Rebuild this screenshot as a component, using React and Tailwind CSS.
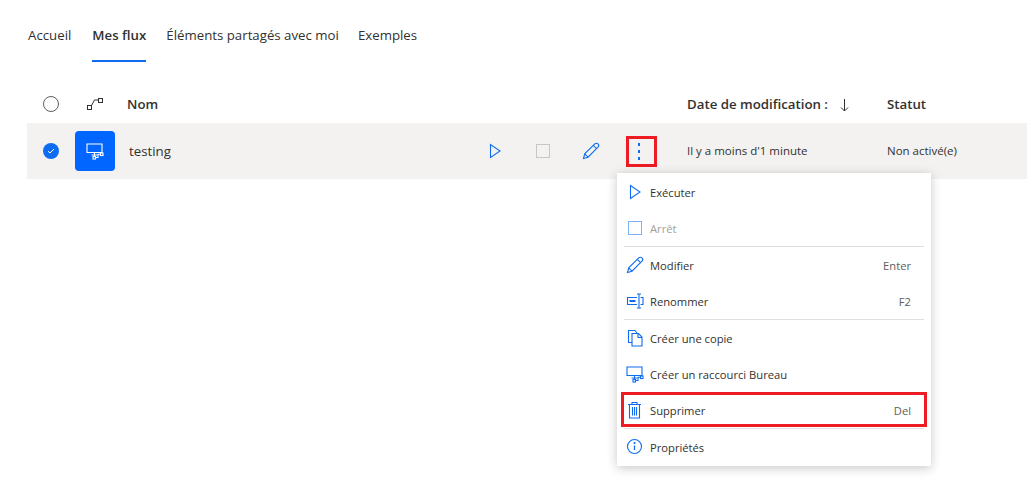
const BLUE = '#0f6cf0'

function Svg({ size = 20, className = '', children }) {
  return (
    <svg width={size} height={size} viewBox="0 0 20 20" fill="none" stroke={BLUE} strokeWidth="1.1" className={className}>
      {children}
    </svg>
  )
}

const PlayIcon = () => <Svg><path d="M5.5 3.500v13l9.500-6.500z" /></Svg>

const PencilIcon = () => (
  <Svg>
    <path d="M2.500 17.500l1.200-4.600L13.800 2.900c.9-.9 2.300-.9 3.200 0s.9 2.300 0 3.200L7 16.200z" />
    <path d="M12.300 4.400l3.300 3.300M3.700 12.900l3.300 3.300" />
  </Svg>
)

const RenameIcon = () => (
  <Svg>
    <path d="M12 6.500H2.500v7H12M15.500 6.500h2.500v7h-2.500" />
    <path d="M4.500 10h6" strokeWidth="2" />
    <path d="M12 3h4M14 3v14M12 17h4" />
  </Svg>
)

const CopyIcon = () => (
  <Svg>
    <path d="M7 14.500H3.500V2.500h6.500l2 2.500" />
    <path d="M7 5.500h6.500l3.500 3.500v9H7z" />
    <path d="M13 5.500V9.500h4" />
  </Svg>
)

const DesktopFlowIcon = ({ color = BLUE }) => (
  <svg width="20" height="20" viewBox="0 0 20 20" fill="none" stroke={color} strokeWidth="1.1">
    <path d="M2 3h15v8.500H2z" />
    <path d="M9.500 11.500v4M6.500 14h6" />
    <rect x="8" y="15.500" width="2.500" height="2.500" />
    <rect x="15.500" y="12" width="2.500" height="2.500" />
    <path d="M10.500 16.500h2.500v-3.200h2.500" />
  </svg>
)

const TrashIcon = () => (
  <Svg>
    <path d="M3 4.500h13M7 4.500V2.500h5v2M4.500 4.500v13.500h10V4.500M7.500 7v8.500M9.500 7v8.500M11.500 7v8.500" />
  </Svg>
)

const InfoIcon = () => (
  <svg width="20" height="20" viewBox="0 0 20 20" fill="none" stroke={BLUE} strokeWidth="1.1">
    <circle cx="9.500" cy="9.500" r="7" />
    <path d="M9.500 8.500v4.500" strokeWidth="1.300" />
    <circle cx="9.500" cy="6" r=".5" fill={BLUE} />
  </svg>
)

const MENU = [
  { label: 'Exécuter', icon: <PlayIcon /> },
  { label: 'Arrêt', disabled: true, icon: <span className="block w-[14px] h-[14px] border border-[#7fb0f5]" /> },
  { divider: true },
  { label: 'Modifier', icon: <PencilIcon />, key: 'Enter' },
  { label: 'Renommer', icon: <RenameIcon />, key: 'F2' },
  { divider: true },
  { label: 'Créer une copie', icon: <CopyIcon /> },
  { label: 'Créer un raccourci Bureau', icon: <DesktopFlowIcon /> },
  { label: 'Supprimer', icon: <TrashIcon />, key: 'Del', marked: true },
  { divider: true },
  { label: 'Propriétés', icon: <InfoIcon /> },
]

function MenuItem({ item }) {
  return (
    <div className={`relative flex items-center h-9 pl-2 pr-5 text-[11.2px] ${item.disabled ? 'text-[#a19f9d]' : 'text-[#323130]'}`}>
      <span className="w-5 h-5 flex items-center justify-center mr-[5px]">{item.icon}</span>
      <span className="flex-1 pt-0.5">{item.label}</span>
      {item.key && <span className="pt-0.5 text-[#605e5c]">{item.key}</span>}
      {item.marked && <span className="absolute left-[4px] right-[4px] top-0 h-[35px] border-[3px] border-[#ed1c24]" />}
    </div>
  )
}

function ContextMenu() {
  return (
    <div className="absolute left-[617px] top-[173px] w-[314px] py-px bg-white shadow-[0_2px_10px_rgba(0,0,0,0.22)]">
      {MENU.map((item, i) =>
        item.divider
          ? <div key={i} className="h-px mx-[7px] bg-[#e1dfdd]" />
          : <MenuItem key={i} item={item} />
      )}
    </div>
  )
}

export default function App() {
  return (
    <div className="relative h-[486px] bg-white overflow-hidden text-[#323130]" style={{ fontFamily: '"Open Sans", "Noto Sans", sans-serif' }}>
      {/* Tabs */}
      <div className="flex gap-5 pl-7 pt-[25px] text-[13.25px] leading-5">
        <div className="h-[37px]">Accueil</div>
        <div className="h-[37px] ml-px font-semibold border-b-2 border-[#0f6cf0]">Mes flux</div>
        <div className="h-[37px]">Éléments partagés avec moi</div>
        <div className="h-[37px] -ml-px">Exemples</div>
      </div>

      {/* Table header */}
      <div className="flex items-center h-[61px] ml-[27px] pt-[25px] text-[13.25px] font-semibold">
        <div className="w-12 flex justify-center">
          <span className="w-4 h-4 mb-0.5 rounded-full border border-[#605e5c]" />
        </div>
        <div className="w-10 flex justify-center">
          <svg width="20" height="20" viewBox="0 0 20 20" fill="none" stroke="#323130" strokeWidth="1">
            <rect x="2.500" y="10.500" width="4" height="4" />
            <rect x="13.500" y="3.500" width="4" height="4" />
            <path d="M6.500 10.500l3-5.500h4" />
          </svg>
        </div>
        <div className="ml-3 flex-1">Nom</div>
        <div className="w-[200px] flex items-center">
          Date de modification :
          <svg width="9" height="13" viewBox="0 0 9 13" fill="none" stroke="#323130" strokeWidth="1" className="ml-3">
            <path d="M4.500 0v12M1 8.500l3.500 3.500 3.500-3.500" />
          </svg>
        </div>
        <div className="w-[140px]">Statut</div>
      </div>

      {/* Selected row */}
      <div className="flex items-center h-14 ml-[27px] bg-[#f3f2f1]">
        <div className="w-12 flex justify-center">
          <span className="w-4 h-4 rounded-full bg-[#0f6cf0] flex items-center justify-center">
            <svg width="8" height="8" viewBox="0 0 8 8" fill="none" stroke="white" strokeWidth="1"><path d="M1 4.200l2 1.800 4-4" /></svg>
          </span>
        </div>
        <div className="w-10 h-10 rounded-sm bg-[#0066ff] flex items-center justify-center">
          <DesktopFlowIcon color="white" />
        </div>
        <div className="ml-3.5 flex-1 pt-0.5 text-[13.25px]">testing</div>
        <div className="flex items-center">
          <div className="w-12 flex justify-center"><PlayIcon /></div>
          <div className="w-12 flex items-center justify-center">
            <span className="w-[14px] h-[14px] border border-[#c8c6c4]" />
          </div>
          <div className="w-12 flex justify-center"><PencilIcon /></div>
          <div className="w-12 flex justify-center">
            <span className="w-[31px] h-[31px] ml-[5px] pr-[5px] border-[3px] border-[#ed1c24] flex flex-col items-center justify-center gap-[4px]">
              <i className="w-[2px] h-[3px] bg-[#0f6cf0]" />
              <i className="w-[2px] h-[3px] bg-[#0f6cf0]" />
              <i className="w-[2px] h-[3px] bg-[#0f6cf0]" />
            </span>
          </div>
        </div>
        <div className="w-[200px] ml-6 text-[11.5px]">Il y a moins d'1 minute</div>
        <div className="w-[140px] text-[11.5px]">Non activé(e)</div>
      </div>

      <ContextMenu />
    </div>
  )
}
